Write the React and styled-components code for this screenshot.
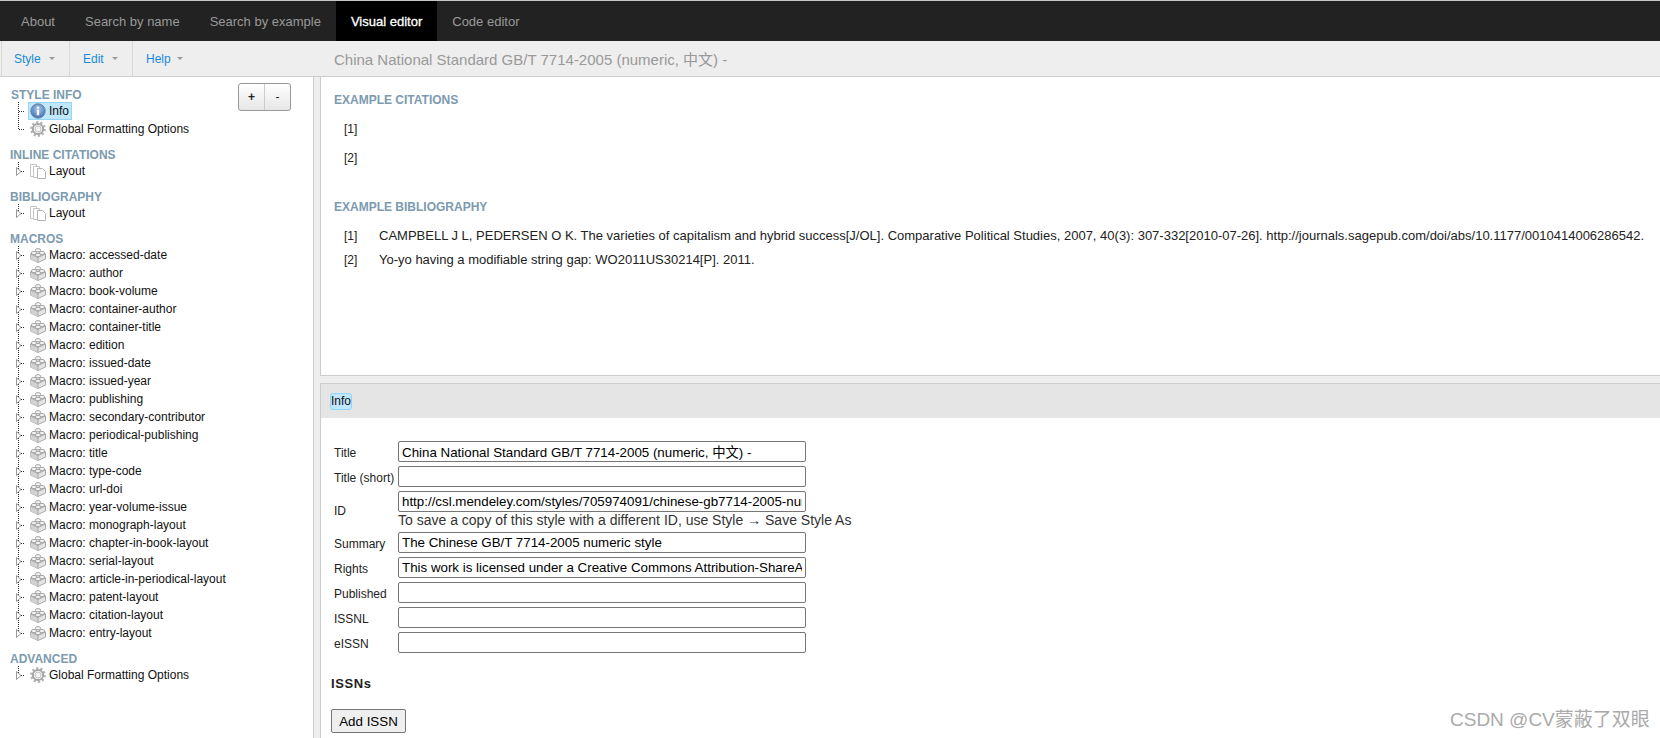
import React from "react";
import styled, { createGlobalStyle } from "styled-components";

const Global = createGlobalStyle`
  html, body { margin: 0; padding: 0; height: 100%; overflow: hidden; background: #fff; }
  body { font-family: "Liberation Sans", Arial, "Noto Sans CJK SC", sans-serif; color: #111; }
  #root { height: 738px; }
`;

const Page = styled.div`
  display: flex; flex-direction: column; width: 1660px; height: 738px; position: relative; overflow: hidden;
`;
const Nav = styled.nav`
  display: flex; height: 40px; flex: none; background: #222; border-top: 1px solid #c8c8c8;
  padding-left: 6px;
`;
const NavTab = styled.div`
  display: flex; align-items: center; padding: 0 15px; font-size: 13px;
  color: ${p => (p.$active ? "#fff" : "#999")};
  background: ${p => (p.$active ? "#000" : "transparent")};
  -webkit-text-stroke: ${p => (p.$active ? "0.3px #fff" : "0")};
`;
const MenuBar = styled.div`
  display: flex; align-items: stretch; height: 36px; flex: none; box-sizing: border-box; background: #eee;
  border-bottom: 1px solid #ccc; padding-left: 1px;
`;
const Menu = styled.div`
  display: flex; align-items: center; border-left: 1px solid #d8d8d8; font-size: 12px; color: #1a8ad8;
  width: ${p => p.$w}px; padding-left: ${p => p.$pad}px; box-sizing: border-box; gap: ${p => p.$gap}px;
  &:last-of-type { border-right: 1px solid #d8d8d8; }
`;
const Caret = styled.span`
  width: 0; height: 0; border: 3px solid transparent; border-top: 3px solid #999; border-bottom: 0;
`;
const DocTitle = styled.div`
  display: flex; align-items: center; margin-left: 138px; font-size: 15px; color: #999;
`;
const Body = styled.div`
  display: flex; flex: 1; min-height: 0; background: #eee;
`;
const Left = styled.aside`
  width: 314px; flex: none; box-sizing: border-box; background: #fff; border-right: 1px solid #ccc;
  padding-top: 11px; position: relative;
`;
const ZoomGroup = styled.div`
  position: absolute; left: 238px; top: 6px; width: 53px; height: 28px; box-sizing: border-box;
  display: flex; border: 1px solid #999; border-radius: 3px;
  background: linear-gradient(#fff, #e6e6e6);
`;
const ZoomBtn = styled.div`
  flex: 1; display: flex; align-items: center; justify-content: center; font-size: 12px; font-weight: 700; color: #222;
  & + & { border-left: 1px solid #ccc; font-weight: 400; }
`;
const SectionTitle = styled.div`
  font-size: 12px; line-height: 14px; font-weight: 700; color: #7c9ab0; text-transform: uppercase;
  padding-left: ${p => p.$x ?? 11}px;
  margin-top: ${p => p.$mt ?? 0}px;
`;
const TreeRow = styled.div`
  display: flex; align-items: center; height: 18px; padding-left: 15px;
`;
const Node = styled.div`
  display: flex; align-items: center; height: 18px; box-sizing: border-box; gap: 3px;
  padding: 0 2px 0 1px; font-size: 12px; color: #111;
  border: 1px solid ${p => (p.$selected ? "#93d5f6" : "transparent")};
  background: ${p => (p.$selected ? "#bfe8fc" : "transparent")};
`;
const Splitter = styled.div`
  width: 6px; flex: none; background: #eee;
`;
const Right = styled.main`
  flex: 1; min-width: 0; display: flex; flex-direction: column; gap: 7px; overflow: hidden;
`;
const Upper = styled.section`
  height: 299px; flex: none; box-sizing: border-box; background: #fff;
  border-left: 1px solid #ccc; border-bottom: 1px solid #ccc; padding: 16px 0 0 13px;
`;
const Lower = styled.section`
  flex: 1; background: #fff; border-left: 1px solid #ccc; border-top: 1px solid #ccc; min-height: 0;
`;
const ExampleTitle = styled.div`
  font-size: 12px; line-height: 14px; font-weight: 700; color: #7c9ab0; text-transform: uppercase;
  margin-top: ${p => p.$mt ?? 0}px;
`;
const Citation = styled.div`
  display: flex; font-size: 12px; line-height: 14px; padding-left: 10px; white-space: nowrap;
  margin-top: ${p => p.$mt}px; color: #222;
`;
const CitationNo = styled.span`
  width: 35px; flex: none;
`;
const EntryText = styled.span`
  font-size: 13px;
`;
const PanelHead = styled.div`
  height: 34px; background: #e5e5e5; display: flex; align-items: center; padding-left: 9px;
`;
const Crumb = styled.span`
  font-size: 12px; padding: 0; line-height: 15px; background: #bfe8fc; border: 1px solid #93d5f6;
  border-radius: 3px; color: #111; margin-top: 1px;
`;
const Form = styled.div`
  padding: 23px 0 0 13px;
`;
const Field = styled.div`
  display: flex; align-items: center; margin-bottom: 4px; min-height: 21px;
`;
const FieldLabel = styled.label`
  width: 64px; flex: none; font-size: 12px; color: #222; white-space: nowrap; padding-top: 2px;
`;
const FieldBody = styled.div`
  display: flex; flex-direction: column;
`;
const TextInput = styled.input`
  width: 408px; height: 21px; box-sizing: border-box; border: 1px solid #767676; border-radius: 2px;
  padding: 1px 3px; font: 13.33px "Liberation Sans", Arial, "Noto Sans CJK SC", sans-serif; color: #000; background: #fff;
  outline: none; display: block;
`;
const Hint = styled.div`
  font-size: 14px; line-height: 15px; color: #333; white-space: nowrap; margin-top: 1px;
`;
const SubHeading = styled.div`
  font-size: 13px; line-height: 15px; font-weight: 700; color: #222; letter-spacing: 0.6px; margin: 23px 0 0 -3px;
`;
const AddButton = styled.button`
  display: block; margin: 18px 0 0 -3px; width: 75px; height: 24px; padding: 0; box-sizing: border-box;
  border: 1px solid #767676; border-radius: 2px; background: #efefef; color: #000;
  font: 13.33px "Liberation Sans", Arial, sans-serif;
`;
const Watermark = styled.div`
  position: absolute; left: 1450px; top: 708px; font-size: 19px; line-height: 24px; color: #aaa; white-space: nowrap;
  font-family: "Liberation Sans", "Noto Sans CJK SC", sans-serif;
`;

const Branch = ({ arrow, last }) => (
  <svg width="13" height="18" viewBox="0 0 13 18" style={{ flex: "none" }}>
    <path d={last ? "M3.5 0V9" : "M3.5 0V18"} stroke="#333" strokeDasharray="1 1" fill="none" />
    <path d="M4 9.5H10" stroke="#333" strokeDasharray="1 1" fill="none" />
    {arrow && <path d="M1.5 5.5L6 9.5L1.5 13.5Z" fill="#fff" stroke="#999" />}
  </svg>
);

const InfoIcon = () => (
  <svg width="16" height="16" viewBox="0 0 16 16" style={{ flex: "none" }}>
    <defs>
      <radialGradient id="ig" cx="50%" cy="35%" r="65%">
        <stop offset="0" stopColor="#a8c8ee" />
        <stop offset="1" stopColor="#3f70b8" />
      </radialGradient>
    </defs>
    <circle cx="8" cy="8" r="7.2" fill="url(#ig)" stroke="#6b7f9e" />
    <circle cx="8" cy="4.6" r="1.2" fill="#fff" />
    <rect x="6.8" y="6.6" width="2.4" height="5.6" fill="#fff" />
  </svg>
);
const GearIcon = () => (
  <svg width="16" height="16" viewBox="0 0 16 16" style={{ flex: "none" }}>
    <circle cx="8" cy="8" r="6.6" fill="none" stroke="#b4b4b4" strokeWidth="2.6" strokeDasharray="2.2 1.95" />
    <circle cx="8" cy="8" r="5.1" fill="none" stroke="#a6a6a6" strokeWidth="2" />
    <circle cx="8" cy="8" r="3" fill="#f3f3f3" stroke="#c4c4c4" />
  </svg>
);
const PagesIcon = () => (
  <svg width="16" height="16" viewBox="0 0 16 16" style={{ flex: "none" }}>
    <path d="M.5 1.5H6.5V13.5H.5Z" fill="#fff" stroke="#c4c4c4" />
    <path d="M3.5 3.5H9.5V14.5H3.5Z" fill="#fff" stroke="#c4c4c4" />
    <path d="M7.5 5.5H12.5L15.5 8.5V15.5H7.5Z" fill="#fff" stroke="#b4b4b4" />
  </svg>
);
const BrickIcon = () => (
  <svg width="16" height="16" viewBox="0 0 16 16" style={{ flex: "none" }}>
    <path d="M8 3.5L15.5 7V12L8 15.5L.5 12V7Z" fill="#e4e4e4" stroke="#a8a8a8" />
    <path d="M.5 7L8 10.5V15.5L.5 12Z" fill="#d2d2d2" />
    <path d="M.5 7L8 10.5L15.5 7M8 10.5V15.5" fill="none" stroke="#a8a8a8" />
    <ellipse cx="8" cy="3.2" rx="2.7" ry="1.6" fill="#f5f5f5" stroke="#a8a8a8" />
    <ellipse cx="4" cy="6" rx="2.7" ry="1.6" fill="#f5f5f5" stroke="#a8a8a8" />
    <ellipse cx="12" cy="6" rx="2.7" ry="1.6" fill="#f5f5f5" stroke="#a8a8a8" />
    <ellipse cx="8" cy="8" rx="2.7" ry="1.6" fill="#f5f5f5" stroke="#a8a8a8" />
  </svg>
);

const Item = ({ icon, label, arrow, last, selected }) => (
  <TreeRow>
    <Branch arrow={arrow} last={last} />
    <Node $selected={selected}>
      {icon}
      <span>{label}</span>
    </Node>
  </TreeRow>
);

const macros = [
  "accessed-date", "author", "book-volume", "container-author", "container-title", "edition",
  "issued-date", "issued-year", "publishing", "secondary-contributor", "periodical-publishing",
  "title", "type-code", "url-doi", "year-volume-issue", "monograph-layout", "chapter-in-book-layout",
  "serial-layout", "article-in-periodical-layout", "patent-layout", "citation-layout", "entry-layout",
];

const tabs = ["About", "Search by name", "Search by example", "Visual editor", "Code editor"];

export default function App() {
  return (
    <Page>
      <Global />
      <Nav>
        {tabs.map(t => (
          <NavTab key={t} $active={t === "Visual editor"}>{t}</NavTab>
        ))}
      </Nav>
      <MenuBar>
        <Menu $w={68} $pad={12} $gap={8}>Style<Caret /></Menu>
        <Menu $w={63} $pad={13} $gap={8}>Edit<Caret /></Menu>
        <Menu $w={64} $pad={13} $gap={6}>Help<Caret /></Menu>
        <DocTitle>China National Standard GB/T 7714-2005 (numeric, 中文) -</DocTitle>
      </MenuBar>
      <Body>
        <Left>
          <ZoomGroup>
            <ZoomBtn>+</ZoomBtn>
            <ZoomBtn>-</ZoomBtn>
          </ZoomGroup>
          <SectionTitle>Style Info</SectionTitle>
          <Item icon={<InfoIcon />} label="Info" selected />
          <Item icon={<GearIcon />} label="Global Formatting Options" last />
          <SectionTitle $mt={10} $x={10}>Inline Citations</SectionTitle>
          <Item icon={<PagesIcon />} label="Layout" arrow last />
          <SectionTitle $mt={10} $x={10}>Bibliography</SectionTitle>
          <Item icon={<PagesIcon />} label="Layout" arrow last />
          <SectionTitle $mt={10} $x={10}>Macros</SectionTitle>
          {macros.map((m, i) => (
            <Item key={m} icon={<BrickIcon />} label={`Macro: ${m}`} arrow last={i === macros.length - 1} />
          ))}
          <SectionTitle $mt={10} $x={10}>Advanced</SectionTitle>
          <Item icon={<GearIcon />} label="Global Formatting Options" arrow last />
        </Left>
        <Splitter />
        <Right>
          <Upper>
            <ExampleTitle>Example Citations</ExampleTitle>
            <Citation $mt={15}><CitationNo>[1]</CitationNo></Citation>
            <Citation $mt={15}><CitationNo>[2]</CitationNo></Citation>
            <ExampleTitle $mt={35}>Example Bibliography</ExampleTitle>
            <Citation $mt={15}>
              <CitationNo>[1]</CitationNo>
              <EntryText>CAMPBELL J L, PEDERSEN O K. The varieties of capitalism and hybrid success[J/OL]. Comparative Political Studies, 2007, 40(3): 307-332[2010-07-26]. http://journals.sagepub.com/doi/abs/10.1177/0010414006286542.</EntryText>
            </Citation>
            <Citation $mt={10}>
              <CitationNo>[2]</CitationNo>
              <EntryText>Yo-yo having a modifiable string gap: WO2011US30214[P]. 2011.</EntryText>
            </Citation>
          </Upper>
          <Lower>
            <PanelHead><Crumb>Info</Crumb></PanelHead>
            <Form>
              <Field><FieldLabel>Title</FieldLabel><TextInput readOnly value="China National Standard GB/T 7714-2005 (numeric, 中文) -" /></Field>
              <Field><FieldLabel>Title (short)</FieldLabel><TextInput readOnly value="" /></Field>
              <Field>
                <FieldLabel>ID</FieldLabel>
                <FieldBody>
                  <TextInput readOnly value="http://csl.mendeley.com/styles/705974091/chinese-gb7714-2005-numeric" />
                  <Hint>To save a copy of this style with a different ID, use Style → Save Style As</Hint>
                </FieldBody>
              </Field>
              <Field><FieldLabel>Summary</FieldLabel><TextInput readOnly value="The Chinese GB/T 7714-2005 numeric style" /></Field>
              <Field><FieldLabel>Rights</FieldLabel><TextInput readOnly value="This work is licensed under a Creative Commons Attribution-ShareAlike 3.0 License" /></Field>
              <Field><FieldLabel>Published</FieldLabel><TextInput readOnly value="" /></Field>
              <Field><FieldLabel>ISSNL</FieldLabel><TextInput readOnly value="" /></Field>
              <Field><FieldLabel>eISSN</FieldLabel><TextInput readOnly value="" /></Field>
              <SubHeading>ISSNs</SubHeading>
              <AddButton>Add ISSN</AddButton>
            </Form>
          </Lower>
        </Right>
      </Body>
      <Watermark>CSDN @CV蒙蔽了双眼</Watermark>
    </Page>
  );
}
